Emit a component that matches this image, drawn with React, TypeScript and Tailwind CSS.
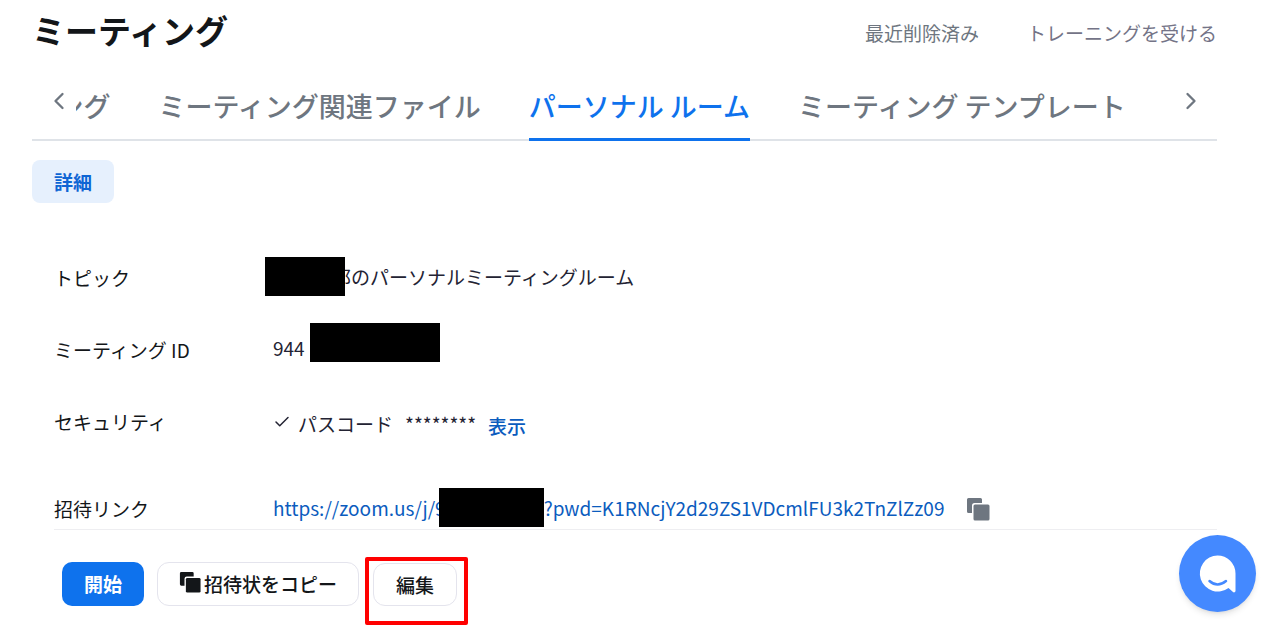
import { Check, ChevronLeft, ChevronRight } from "lucide-react";

const tabs = [
  { label: "ミーティング", active: false },
  { label: "ミーティング関連ファイル", active: false },
  { label: "パーソナル ルーム", active: true },
  { label: "ミーティング テンプレート", active: false },
];

function CopyIcon({ className }: { className: string }) {
  return (
    <svg viewBox="0 0 24 24" fill="currentColor" className={className} aria-hidden="true">
      <path d="M2.500 1h12A1.500 1.500 0 0 1 16 2.500V6H8.500A2.500 2.500 0 0 0 6 8.500V16H2.500A1.500 1.500 0 0 1 1 14.500v-12A1.500 1.500 0 0 1 2.500 1Z" />
      <rect x="7.500" y="7.500" width="16" height="16" rx="1.500" />
    </svg>
  );
}

function Row({ label, className = "", children }: any) {
  return (
    <div className={`flex items-center h-10 ${className}`}>
      <dt className="w-[219px] shrink-0 text-[#131619]">{label}</dt>
      <dd className="flex items-center h-10 text-[#232333] whitespace-nowrap">{children}</dd>
    </div>
  );
}

function Tabs() {
  return (
    <nav className="flex items-stretch mt-5 border-b-2 border-[#dfe3e8]">
      <button type="button" aria-label="前へ" className="w-11 shrink-0 pl-[13px] pb-[10px] text-[#6e7680]">
        <ChevronLeft size={28} strokeWidth={2} />
      </button>
      <div className="flex-1 min-w-0 overflow-hidden -mb-[2px]">
        <div className="flex gap-12 -ml-[126px]">
          {tabs.map((tab, index) => (
            <a
              key={index}
              href="#"
              className={
                tab.active
                  ? "shrink-0 h-[68px] leading-[66px] text-[27px] font-medium whitespace-nowrap text-[#0e72ed] border-b-3 border-[#0e72ed]"
                  : "shrink-0 h-[66px] leading-[66px] text-[27px] font-medium whitespace-nowrap text-[#6e7680]"
              }
            >
              {tab.label}
            </a>
          ))}
        </div>
      </div>
      <button type="button" aria-label="次へ" className="w-10 shrink-0 pb-[10px] text-[#6e7680]">
        <ChevronRight size={28} strokeWidth={2} />
      </button>
    </nav>
  );
}

export default function App() {
  return (
    <div className="min-h-screen bg-white pl-8 pr-11 text-[19px] leading-7 font-['Noto_Sans_CJK_JP',sans-serif]">
      <header className="flex items-center justify-between h-[53px] pt-[6px]">
        <h1 className="text-[33px] leading-[46px] font-bold text-[#131619]">ミーティング</h1>
        <div className="flex gap-12 pt-[6px]">
          <a href="#" className="text-[#6e7680]">最近削除済み</a>
          <a href="#" className="text-[#747487]">トレーニングを受ける</a>
        </div>
      </header>

      <Tabs />

      <button
        type="button"
        className="mt-[19px] h-[43px] px-[22px] rounded-lg bg-[#e6f0fd] text-[#0e65d4] font-bold"
      >
        詳細
      </button>

      <section className="pl-[22px]">
        <dl className="mt-[55px] border-b border-[#eeeef1]">
          <Row label="トピック">
            <span className="relative self-start -mt-px -ml-2 -mr-[13px] w-20 h-[39px] bg-black" />
            <span className="pb-[2px]">郎のパーソナルミーティングルーム</span>
          </Row>
          <Row label="ミーティング ID" className="mt-8">
            <span className="pb-1">944</span>
            <span className="self-start -mt-[7px] ml-[5px] w-[130px] h-[39px] bg-black" />
          </Row>
          <Row label="セキュリティ" className="mt-8">
            <Check size={18} strokeWidth={2} className="mr-[7px]" />
            <span className="pt-1">パスコード</span>
            <span className="ml-3 pt-1">********</span>
            <a href="#" className="ml-3 pt-2 font-medium text-[#0b5cbe]">表示</a>
          </Row>
          <Row label="招待リンク" className="mt-[47px]">
            <a href="#" className="flex items-center h-10 text-[#0b5cbe]">
              <span className="pb-[2px]">https://zoom.us/j/9</span>
              <span className="relative self-start -mt-px -ml-[7px] w-[105px] h-[39px] bg-black" />
              <span className="pb-[2px]">?pwd=K1RNcjY2d29ZS1VDcmlFU3k2TnZlZz09</span>
            </a>
            <button type="button" aria-label="コピー" className="ml-[22px] text-[#6e7680]">
              <CopyIcon className="size-6" />
            </button>
          </Row>
        </dl>

        <div className="flex items-start mt-[27px] pl-2 font-medium">
          <button
            type="button"
            className="h-11 mt-[5px] px-[22px] rounded-[10px] bg-[#0e72ed] text-white font-bold"
          >
            開始
          </button>
          <button
            type="button"
            className="flex items-center gap-[3px] h-11 mt-[5px] ml-[13px] px-[21px] rounded-[12px] border border-[#e4e4ed] text-[#131619]"
          >
            <CopyIcon className="size-[22px] mb-1" />
            招待状をコピー
          </button>
          <div className="ml-[6px] border-4 border-[#ff0000] rounded-xs pl-1 pr-[7px] pt-[2px] pb-[15px]">
            <button
              type="button"
              className="h-[43px] px-[22px] rounded-[12px] border border-[#e4e4ed] text-[#131619]"
            >
              編集
            </button>
          </div>
        </div>
      </section>

      <button
        type="button"
        aria-label="チャット"
        className="fixed right-[5px] bottom-[19px] size-[77px] rounded-full bg-[#4489ff] shadow-md"
      >
        <svg viewBox="0 0 77 77" className="size-full" aria-hidden="true">
          <path
            d="M38.500 20.500a18 18 0 0 1 18 18v17.500a1.500 1.500 0 0 1-2.500 1l-4.500-4a18 18 0 1 1-11-32.500Z"
            fill="#fff"
          />
          <path d="M30.500 46q8 7 16.500 0" fill="none" stroke="#4489ff" strokeWidth="2.500" strokeLinecap="round" />
        </svg>
      </button>
    </div>
  );
}
